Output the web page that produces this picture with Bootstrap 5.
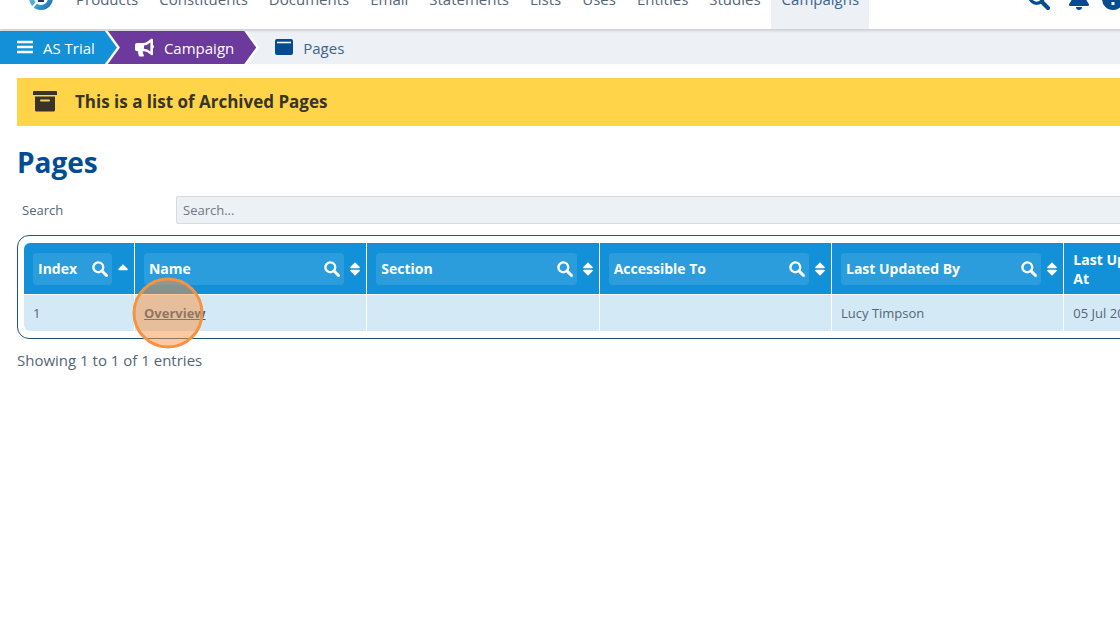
<!DOCTYPE html>
<html lang="en">
<head>
<meta charset="utf-8">
<meta name="viewport" content="width=device-width, initial-scale=1">
<title>Archived Pages</title>
<link href="https://cdn.jsdelivr.net/npm/bootstrap@5.3.0/dist/css/bootstrap.min.css" rel="stylesheet">
<script src="https://cdn.jsdelivr.net/npm/bootstrap@5.3.0/dist/js/bootstrap.bundle.min.js" defer></script>
<style>
  body { font-family: "Open Sans", "Noto Sans", sans-serif; font-size: 13px; line-height: 20px; color: #546577; background: #fff; overflow-x: hidden; }
  a { text-decoration: none; }

  /* The header is scrolled half out of view */
  .site-header { height: 60px; margin-top: -31px; margin-right: -8px; padding-left: 27px; background: #fff; position: relative; z-index: 5; box-shadow: 0 2px 2px rgba(60, 70, 80, .18); }
  .site-nav { margin-left: 12px; }
  .site-nav .nav-link { font-size: 15px; padding: 0 10px 0 11px; color: #546577; white-space: nowrap; }
  .site-nav .nav-link.active { background: #edf0f5; color: #3a6591; }
  .tool-set { gap: 12px; }
  .tool-btn { border: 0; padding: 0; background: none; color: #034c92; line-height: 0; }
  .tool-btn:first-child { margin-right: 6px; }

  .crumbs { background: #edf0f5; height: 35px; padding-top: 2px; }
  .crumb-step { background: #fff; padding-right: 3px; position: relative; z-index: 2; }
  .crumb-step + .crumb-step { margin-left: -16px; z-index: 1; }
  .crumb-step, .crumb-step a { clip-path: polygon(0 0, calc(100% - 12px) 0, 100% 50%, calc(100% - 12px) 100%, 0 100%); }
  .crumb-step a, .crumb-here { font-size: 15px; }
  .crumb-step a { color: #fff; background: #1291d9; padding: 0 22px 0 16px; gap: 9px; }
  .crumb-step + .crumb-step a { background: #6b3a9c; padding-left: 30px; gap: 10px; }
  .crumb-here { color: #3a6591; gap: 9px; padding-left: 15px; }

  .content { margin-right: -67px; padding: 14px 0 0 17px; }
  .archive-note { background: #ffd448; color: #38342a; height: 48px; font-size: 17px; line-height: 24px; font-weight: 700; padding-left: 16px; gap: 18px; }
  .page-title { font-size: 28px; line-height: 40px; font-weight: 700; color: #034c92; margin: 16px 0 14px; }
  .search-label { width: 159px; padding-left: 5px; }
  .search-box { height: 28px; padding: 0 6px; font-size: 13px; background: #edf0f5; border: 1px solid #d5dbe3; border-radius: 2px; color: #546577; }
  .search-box::placeholder { color: #6e7882; }

  .grid-frame { border: 1px solid #1f567f; border-radius: 12px; padding: 7px 6px; margin: 11px 0; }
  .pages-grid { table-layout: fixed; border-collapse: separate; border-spacing: 0; width: 100%; }
  .pages-grid th, .pages-grid td { border-right: 1px solid #fff; vertical-align: middle; }
  .pages-grid th { height: 52px; background: #1291d9; color: #fff; font-size: 14px; font-weight: 700; line-height: 19px; border-bottom: 1px solid #fff; padding: 0 6px 0 9px; }
  .pages-grid td { height: 36px; background: #d4e9f6; padding: 0 9px; }
  .pages-grid th:first-child { border-top-left-radius: 6px; }
  .pages-grid td:first-child { border-bottom-left-radius: 6px; }
  .col-index { width: 9.6%; }
  .col-wide { width: 20.1%; }
  .head-tools { gap: 6px; }
  .filter-btn { height: 32px; border: 0; border-radius: 4px; background: #2b9ddd; color: #fff; font-weight: 700; padding: 0 4px 0 5px; }
  .sort-btn { border: 0; background: none; padding: 0; line-height: 0; color: #fff; width: 10px; }
  .page-link-name { color: #1b5889; font-weight: 700; text-decoration: underline; }
  .click-spot { position: absolute; left: 24px; top: 50%; width: 71px; height: 71px; transform: translate(-50%, -50%); border: 3px solid #f49443; border-radius: 50%; background: rgba(249, 147, 66, .5); pointer-events: none; }
  .entry-count { font-size: 15px; }
</style>
</head>
<body>
<svg class="d-none" aria-hidden="true">
  <symbol id="i-search" viewBox="0 0 16 16"><circle cx="6.3" cy="6.3" r="4.9" fill="none" stroke="currentColor" stroke-width="2.4"/><path d="M10 10l4.5 4.5" stroke="currentColor" stroke-width="3" stroke-linecap="round"/></symbol>
  <symbol id="i-sort" viewBox="0 0 10 14"><path d="M5 .2 9.700 5q.5 1.200-.7 1.200H1Q-.2 6.200.3 5zM5 13.800.3 9Q-.2 7.800 1 7.800h8q1.200 0 .7 1.200z" fill="currentColor"/></symbol>
  <symbol id="i-up" viewBox="0 0 10 14"><path d="M5 2.200 9.700 7q.5 1.200-.7 1.200H1Q-.2 8.200.3 7z" fill="currentColor"/></symbol>
</svg>

<header class="site-header d-flex align-items-stretch">
  <a href="#" class="d-flex align-items-center" aria-label="Home">
    <svg width="26" height="26" viewBox="0 0 26 26">
      <defs><linearGradient id="orb" x1="0" y1="0" x2="1" y2="1"><stop offset="0" stop-color="#8fd0ee"/><stop offset=".5" stop-color="#3fa6dc"/><stop offset="1" stop-color="#17639f"/></linearGradient></defs>
      <circle cx="14" cy="12" r="12" fill="url(#orb)"/>
      <circle cx="14" cy="12" r="7" fill="#fff"/>
      <path d="M4 21.500 9.500 15l1.500 1.500L5.500 23z" fill="#fff"/>
      <rect x="11" y="9" width="6" height="7" fill="#1b3a75"/>
    </svg>
  </a>
  <nav class="site-nav nav flex-nowrap flex-grow-1" aria-label="Main">
    <a class="nav-link d-flex align-items-center" href="#">Products</a>
    <a class="nav-link d-flex align-items-center" href="#">Constituents</a>
    <a class="nav-link d-flex align-items-center" href="#">Documents</a>
    <a class="nav-link d-flex align-items-center" href="#">Email</a>
    <a class="nav-link d-flex align-items-center" href="#">Statements</a>
    <a class="nav-link d-flex align-items-center" href="#">Lists</a>
    <a class="nav-link d-flex align-items-center" href="#">Uses</a>
    <a class="nav-link d-flex align-items-center" href="#">Entities</a>
    <a class="nav-link d-flex align-items-center" href="#">Studies</a>
    <a class="nav-link active d-flex align-items-center" href="#" aria-current="page">Campaigns</a>
  </nav>
  <div class="tool-set d-flex align-items-center pe-1">
    <button class="tool-btn" type="button" aria-label="Search"><svg width="22" height="22"><use href="#i-search"/></svg></button>
    <button class="tool-btn" type="button" aria-label="Notifications"><svg width="22" height="22" viewBox="0 0 22 22"><path d="M11 0a2 2 0 0 1 2 2c3 1 5 3 5 7 0 5 3 6 3 7.500 0 1-.5 1.500-1.500 1.500h-17C1.500 18 1 17.500 1 16.500 1 15 4 14 4 9c0-4 2-6 5-7a2 2 0 0 1 2-2zM8 19h6a3 3 0 0 1-6 0z" fill="currentColor"/></svg></button>
    <button class="tool-btn" type="button" aria-label="Information"><svg width="22" height="22" viewBox="0 0 22 22"><circle cx="11" cy="11" r="11" fill="currentColor"/><path d="M11 4v8M11 14v3" stroke="#fff" stroke-width="3"/></svg></button>
  </div>
</header>

<nav class="crumbs d-flex align-items-stretch" aria-label="Breadcrumb">
  <div class="crumb-step d-flex"><a href="#" class="d-flex align-items-center">
    <svg width="18" height="18" viewBox="0 0 18 18"><path d="M1 3h16M1 8h16M1 13h16" stroke="#fff" stroke-width="2.300"/></svg><span>AS Trial</span></a></div>
  <div class="crumb-step d-flex"><a href="#" class="d-flex align-items-center">
    <svg width="20" height="20" viewBox="0 0 20 20"><path fill="#fff" fill-rule="evenodd" d="M17.500.5q1.500 0 1.500 1.500v5q1 .5 1 1.800T19 10.600V16q0 2-1.800 1l-3-2.200q-2-1.300-4.200-1.500H8.700q0 2 1.100 3.700.6 1.500-.8 1.500H6q-1 0-1.300-1-.9-2.300-.5-4.200H3q-2 0-2-2V7q0-2 2-2h6q3 0 5.500-2.200zM16.400 4.500Q13.500 7.300 10 7.500v3.300q3.500.1 6.400 2.700z"/></svg><span>Campaign</span></a></div>
  <a href="#" class="crumb-here d-flex align-items-center" aria-current="page">
    <svg width="20" height="18" viewBox="0 0 20 18"><rect x="1" y="0" width="18" height="16" rx="2" fill="#034c92"/><path d="M3 3.500h14" stroke="#fff" stroke-width="1.600"/></svg><span>Pages</span></a>
</nav>

<main class="content">
  <div class="archive-note d-flex align-items-center">
    <svg width="24" height="22" viewBox="0 0 24 22"><path fill="#38342a" fill-rule="evenodd" d="M1 0h22q1 0 1 1v3H0V1q0-1 1-1zM2 5.500h20V19q0 1.500-1.500 1.500h-17Q2 20.500 2 19zM8 8.500q-1 0-1 1t1 1h8q1 0 1-1t-1-1z"/></svg>
    <span>This is a list of Archived Pages</span>
  </div>

  <h1 class="page-title">Pages</h1>

  <div class="d-flex align-items-center">
    <label class="search-label flex-shrink-0" for="q">Search</label>
    <input class="search-box flex-grow-1" id="q" type="text" placeholder="Search...">
  </div>

  <div class="grid-frame">
    <table class="pages-grid">
      <colgroup><col class="col-index"><col class="col-wide"><col class="col-wide"><col class="col-wide"><col class="col-wide"><col></colgroup>
      <thead>
        <tr>
          <th scope="col"><div class="head-tools d-flex align-items-center"><button type="button" class="filter-btn d-flex align-items-center justify-content-between flex-grow-1">Index<svg width="16" height="16"><use href="#i-search"/></svg></button><button type="button" class="sort-btn" aria-label="Sort by index"><svg width="10" height="14"><use href="#i-up"/></svg></button></div></th>
          <th scope="col"><div class="head-tools d-flex align-items-center"><button type="button" class="filter-btn d-flex align-items-center justify-content-between flex-grow-1">Name<svg width="16" height="16"><use href="#i-search"/></svg></button><button type="button" class="sort-btn" aria-label="Sort by name"><svg width="10" height="14"><use href="#i-sort"/></svg></button></div></th>
          <th scope="col"><div class="head-tools d-flex align-items-center"><button type="button" class="filter-btn d-flex align-items-center justify-content-between flex-grow-1">Section<svg width="16" height="16"><use href="#i-search"/></svg></button><button type="button" class="sort-btn" aria-label="Sort by section"><svg width="10" height="14"><use href="#i-sort"/></svg></button></div></th>
          <th scope="col"><div class="head-tools d-flex align-items-center"><button type="button" class="filter-btn d-flex align-items-center justify-content-between flex-grow-1">Accessible To<svg width="16" height="16"><use href="#i-search"/></svg></button><button type="button" class="sort-btn" aria-label="Sort by accessible to"><svg width="10" height="14"><use href="#i-sort"/></svg></button></div></th>
          <th scope="col"><div class="head-tools d-flex align-items-center"><button type="button" class="filter-btn d-flex align-items-center justify-content-between flex-grow-1">Last Updated By<svg width="16" height="16"><use href="#i-search"/></svg></button><button type="button" class="sort-btn" aria-label="Sort by last updated by"><svg width="10" height="14"><use href="#i-sort"/></svg></button></div></th>
          <th scope="col">Last Updated At</th>
        </tr>
      </thead>
      <tbody>
        <tr>
          <td>1</td>
          <td><span class="position-relative d-inline-block"><a href="#" class="page-link-name">Overview</a><span class="click-spot"></span></span></td>
          <td></td>
          <td></td>
          <td>Lucy Timpson</td>
          <td class="text-nowrap">05 Jul 2023</td>
        </tr>
      </tbody>
    </table>
  </div>

  <p class="entry-count mb-0">Showing 1 to 1 of 1 entries</p>
</main>
</body>
</html>
